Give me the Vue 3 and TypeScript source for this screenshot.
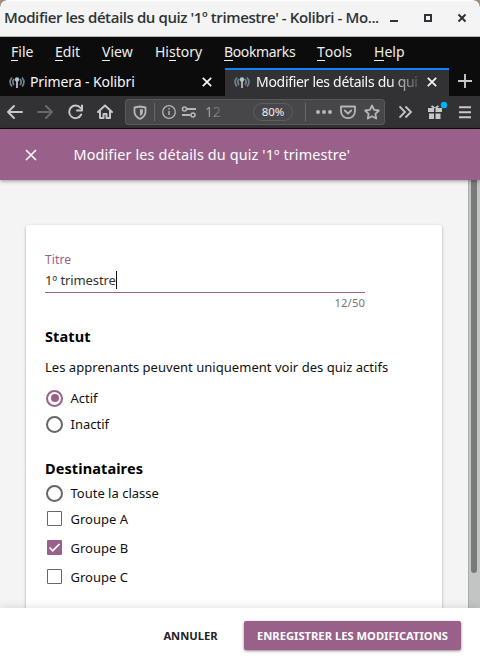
<script setup lang="ts">
import { ref } from 'vue'

const menus: { before: string; key: string; after: string; cls: string }[] = [
  { before: '', key: 'F', after: 'ile', cls: 'file' },
  { before: '', key: 'E', after: 'dit', cls: 'edit' },
  { before: '', key: 'V', after: 'iew', cls: 'view' },
  { before: 'Hi', key: 's', after: 'tory', cls: 'history' },
  { before: '', key: 'B', after: 'ookmarks', cls: 'bookmarks' },
  { before: '', key: 'T', after: 'ools', cls: 'tools' },
  { before: '', key: 'H', after: 'elp', cls: 'help' },
]
const tabs = [
  { label: 'Primera - Kolibri', active: false },
  { label: 'Modifier les détails du qui', active: true },
]
const title = ref('1º trimestre')
const status = ref('Actif')
const groups = ref([
  { name: 'Groupe A', checked: false },
  { name: 'Groupe B', checked: true },
  { name: 'Groupe C', checked: false },
])
</script>

<template>
  <div class="window">
    <div class="titlebar">
      <span class="window-title">Modifier les détails du quiz '1º trimestre' - Kolibri - Mo...</span>
      <svg class="controls" width="90" height="36" viewBox="0 0 90 36" fill="none" stroke="#2e3436" stroke-width="2">
        <path d="M10 21h8" />
        <rect x="45" y="15" width="6" height="6" />
        <path d="M78.500 14.500l7 7M85.500 14.500l-7 7" />
      </svg>
    </div>

    <div class="menubar">
      <span v-for="m in menus" :key="m.cls" class="menu" :class="m.cls">{{ m.before }}<span class="key">{{ m.key }}</span>{{ m.after }}</span>
    </div>

    <div class="tabs">
      <div v-for="t in tabs" :key="t.label" class="tab" :class="{ active: t.active }">
        <svg class="favicon" width="16" height="14" viewBox="0 0 16 14" fill="none">
          <path d="M3 2.500Q-.8 7 3 11.500M5 4Q2.700 7 5 10M13 2.500Q16.800 7 13 11.500M11 4Q13.300 7 11 10" stroke="#71818b" stroke-width="1.700" />
          <path d="M8 3v10" stroke="#b5a2c2" stroke-width="2" />
          <circle cx="8" cy="4.500" r="2.200" fill="#a9cbc7" />
        </svg>
        <span class="tab-label">{{ t.label }}</span>
        <svg class="tab-close" width="10" height="10" viewBox="0 0 10 10" stroke="#f9f9fa" stroke-width="1.700"><path d="M.8.8l8.400 8.400M9.200.8L.8 9.200" /></svg>
      </div>
      <svg class="new-tab" width="14" height="14" viewBox="0 0 14 14" stroke="#c9c9ca" stroke-width="1.900"><path d="M7 0v14M0 7h14" /></svg>
    </div>

    <div class="navbar">
      <svg class="nav-icons" width="120" height="32" viewBox="0 0 120 32" fill="none" stroke="#c7c7c8" stroke-width="2" stroke-linecap="round" stroke-linejoin="round">
        <path d="M22 16H8M14 10l-6 6 6 6" />
        <path d="M38 16h14M46 10l6 6-6 6" stroke="#69696c" />
        <path d="M80.500 12A6.300 6.300 0 1 0 81.200 18.500M82 9.500v5h-5" />
        <path d="M98 16l7-6.500 7 6.500M100 15v7h3.500v-4h3v4h3.500v-7" />
      </svg>
      <div class="urlbar">
        <svg width="74" height="24" viewBox="0 0 74 24" fill="none" stroke="#b6b6b8">
          <path d="M8.500 7.500l5.500-1 5.500 1v4.500c0 3-2.400 5.400-5.500 7-3.100-1.600-5.500-4-5.500-7z" stroke-width="1.800" stroke-linejoin="round" />
          <path d="M14 9v7c2-1 3-2.500 3-4.500V9.500z" fill="#b6b6b8" stroke="none" />
          <path d="M28.500 3v18" stroke="#69696c" />
          <circle cx="43" cy="12" r="6.300" stroke-width="1.300" />
          <path d="M43 11v4M43 8v1.500" stroke-width="1.500" />
          <path d="M61 9h9M56 15h8" stroke-width="1.800" />
          <circle cx="58.500" cy="9" r="2" stroke-width="1.600" />
          <circle cx="67" cy="15" r="2" stroke-width="1.600" />
        </svg>
        <span class="address">12</span>
        <span class="zoom">80%</span>
        <svg class="page-actions" width="78" height="24" viewBox="0 0 78 24" fill="none" stroke="#b6b6b8" stroke-width="1.800" stroke-linejoin="round" stroke-linecap="round">
          <path d="M.5 3v18" stroke="#69696c" stroke-width="1" />
          <g fill="#b6b6b8" stroke="none"><circle cx="13" cy="12" r="2" /><circle cx="19" cy="12" r="2" /><circle cx="25" cy="12" r="2" /></g>
          <path d="M36 6.500h14v4.500c0 9.500-14 9.500-14 0zM39.800 10.500l3.200 3.200 3.200-3.200" />
          <path d="M67 5.500l2.100 4.300 4.700.7-3.400 3.300.8 4.700-4.200-2.200-4.200 2.200.8-4.700-3.400-3.300 4.700-.7z" />
        </svg>
      </div>
      <svg class="tools-icons" width="80" height="32" viewBox="0 0 80 32" fill="none" stroke="#c7c7c8" stroke-width="2">
        <path d="M.5 10.500l5.500 5.500-5.500 5.500M6.500 10.500l5.500 5.500-5.500 5.500" stroke-width="1.800" />
        <g fill="#c7c7c8" stroke="none"><path d="M29 12h6v4h-6zM36.500 12h6.500v4h-6.500zM30 17.500h5V23h-5zM36.500 17.500h5V23h-5z" /></g>
        <path d="M35.500 12l-3-2M36.500 12l3-2" />
        <circle cx="45" cy="9" r="3.200" fill="#00b3f4" stroke="none" />
        <path d="M60 11.200h12M60 16.200h12M60 21.200h12" />
      </svg>
    </div>

    <header class="appbar">
      <svg width="12" height="12" viewBox="0 0 12 12" stroke="#fff" stroke-width="1.600"><path d="M1 1l10 10M11 1L1 11" /></svg>
      <span class="app-title">Modifier les détails du quiz '1º trimestre'</span>
    </header>

    <main class="content">
      <div class="card">
        <div class="field-label">Titre</div>
        <div class="field"><span>{{ title }}</span><i class="caret"></i></div>
        <div class="counter">{{ title.length }}/50</div>
        <h2 class="statut">Statut</h2>
        <p class="hint">Les apprenants peuvent uniquement voir des quiz actifs</p>
        <div v-for="s in ['Actif', 'Inactif']" :key="s" class="option" @click="status = s">
          <span class="radio" :class="{ on: status === s }"></span><span>{{ s }}</span>
        </div>
        <h2 class="dest">Destinataires</h2>
        <div class="option whole"><span class="radio"></span><span>Toute la classe</span></div>
        <div v-for="g in groups" :key="g.name" class="option group" @click="g.checked = !g.checked">
          <span class="box" :class="{ on: g.checked }">
            <svg v-if="g.checked" width="15" height="15" viewBox="0 0 15 15" fill="none" stroke="#fff" stroke-width="1.700"><path d="M2.500 7.500l3.200 3.200L12.500 4" /></svg>
          </span><span>{{ g.name }}</span>
        </div>
      </div>
      <div class="scrollbar"><div class="thumb"></div></div>
    </main>

    <footer class="footer">
      <button class="cancel">ANNULER</button>
      <button class="save">ENREGISTRER LES MODIFICATIONS</button>
    </footer>
  </div>
</template>

<style>
body { margin: 0; background: #fff; }
</style>

<style scoped>
.window { width: 480px; height: 666px; overflow: hidden; display: flex; flex-direction: column; font-family: "Noto Sans", sans-serif; background: #0c0c0d; white-space: nowrap; }
.window * { box-sizing: border-box; }
svg { flex: none; display: block; }
.titlebar { height: 37px; flex: none; display: flex; padding-left: 4px; background: linear-gradient(#fff 0, #f4f4f4 2px); border-bottom: 1px solid #b9b5b0; border-radius: 7px 7px 0 0; box-shadow: 0 -8px 0 #a58f78; }
.window-title { width: 380px; flex: none; font: 600 15px/35px "Open Sans", sans-serif; letter-spacing: -.4px; color: #2e3436; }
.controls { margin-left: -4px; }
.menubar { height: 31px; flex: none; display: flex; font-size: 14px; line-height: 30px; color: #eeeeec; padding-left: 11px; background: #0c0c0c; }
.bookmarks { letter-spacing: -.35px; }
.key { display: inline-block; line-height: 16px; border-bottom: 1px solid #eeeeec; }
.file { width: 44px; } .edit { width: 47px; } .view { width: 53px; } .history { width: 69px; }
.bookmarks { width: 93px; } .tools { width: 57px; }
.tabs { height: 28px; flex: none; display: flex; align-items: center; }
.tab { width: 225px; height: 28px; display: flex; align-items: center; padding: 0 12px 2px 9px; border-top: 2px solid transparent; color: #f9f9fa; }
.tab.active { width: 224px; border-top-color: #0a84ff; background: #323234; }
.tab-label { width: 162px; margin: 0 10px 0 5px; font-size: 14px; line-height: 22px; letter-spacing: -.1px; }
.active .tab-label { width: 165px; margin: 0 8px 0 6px; letter-spacing: -.3px; mask-image: linear-gradient(90deg, #000 82%, #0003 99%); }
.new-tab { margin: 0 0 2px 9px; }
.navbar { height: 33px; flex: none; display: flex; align-items: flex-start; background: #323234; border-bottom: 1px solid #0c0c0d; }
.urlbar { width: 260px; height: 26px; margin: 3px 0 0 5px; display: flex; align-items: center; border: 1px solid #5a5a5c; border-radius: 3px; background: #474749; }
.address { margin-left: 5px; width: 18px; font-size: 14px; line-height: 24px; color: #a1a1a3; mask-image: linear-gradient(90deg, #000 20%, #0003); }
.zoom { width: 40px; height: 18px; margin-left: 30px; border: 1px solid #5d5d5f; border-radius: 10px; font-size: 11.500px; line-height: 16px; text-align: center; color: #f0f0f1; }
.page-actions { margin-left: 12px; }
.tools-icons { margin-left: 14px; }
.appbar { height: 51px; flex: none; display: flex; align-items: center; padding-left: 25px; background: #996189; color: #fff; box-shadow: 0 1px 4px #0006; position: relative; z-index: 1; }
.app-title { margin-left: 36.500px; font-size: 14.400px; line-height: 20px; letter-spacing: .13px; }
.content { height: 428px; flex: none; display: flex; justify-content: space-between; padding-left: 26px; background: #f4f4f4; overflow: hidden; }
.card { width: 416px; height: 460px; margin-top: 45px; padding: 25px 19px 0; background: #fff; border-radius: 2px; box-shadow: 0 1px 3px #0005; font-size: 13px; color: #111; }
.field-label { height: 20px; font-size: 12px; line-height: 20px; letter-spacing: .1px; color: #996189; }
.field { width: 320px; height: 23px; display: flex; align-items: flex-start; line-height: 20px; letter-spacing: -.1px; border-bottom: 1px solid #996189; color: #333; }
.caret { width: 1px; height: 18px; margin-top: 1px; background: #111; }
.counter { width: 320px; height: 20px; text-align: right; font-size: 11.200px; letter-spacing: .15px; line-height: 20px; color: #777; }
h2 { margin: 0; font-size: 14.500px; letter-spacing: .1px; line-height: 24px; height: 24px; color: #000; }
.statut { margin-top: 11px; }
.hint { margin: 7px 0 6px; height: 24px; line-height: 24px; letter-spacing: .03px; }
.option { height: 26px; display: flex; align-items: center; gap: 7.500px; padding-left: 1px; }
.radio { width: 17px; height: 17px; flex: none; border: 2px solid #666; border-radius: 50%; display: flex; align-items: center; justify-content: center; }
.radio.on { border-color: #996189; }
.radio.on::after { content: ""; width: 8px; height: 8px; border-radius: 50%; background: #996189; }
.dest { margin-top: 19px; }
.whole { height: 25px; }
.whole .radio { margin-top: 1px; }
.group { height: 29px; padding-left: 2px; }
.whole + .group { height: 28px; padding-bottom: 1px; }
.box { width: 15px; height: 15px; margin-right: 1px; border: 1.500px solid #666; outline: .5px solid #66666680; outline-offset: -1.500px; border-radius: 1px; }
.box.on { border: 0; outline: 0; background: #996189; }
.scrollbar { width: 12px; height: 428px; padding-left: 2px; border-left: 1px solid #aaadac; background: #c2c5c4; }
.thumb { width: 6px; height: 393px; border-radius: 0 0 3px 3px; background: #777a79; }
.footer { height: 58px; flex: none; display: flex; justify-content: flex-end; align-items: center; padding: 0 19px 3px 0; background: #fff; box-shadow: 0 -2px 8px #00000018; position: relative; }
button { border: 0; padding: 0; font: bold 11.200px/29px "Noto Sans", sans-serif; color: #222; background: none; }
.cancel { width: 55px; margin-right: 26px; }
.save { width: 217px; height: 29px; border-radius: 2px; background: #996189; color: #fff; box-shadow: 0 1px 3px #0007; }
</style>
